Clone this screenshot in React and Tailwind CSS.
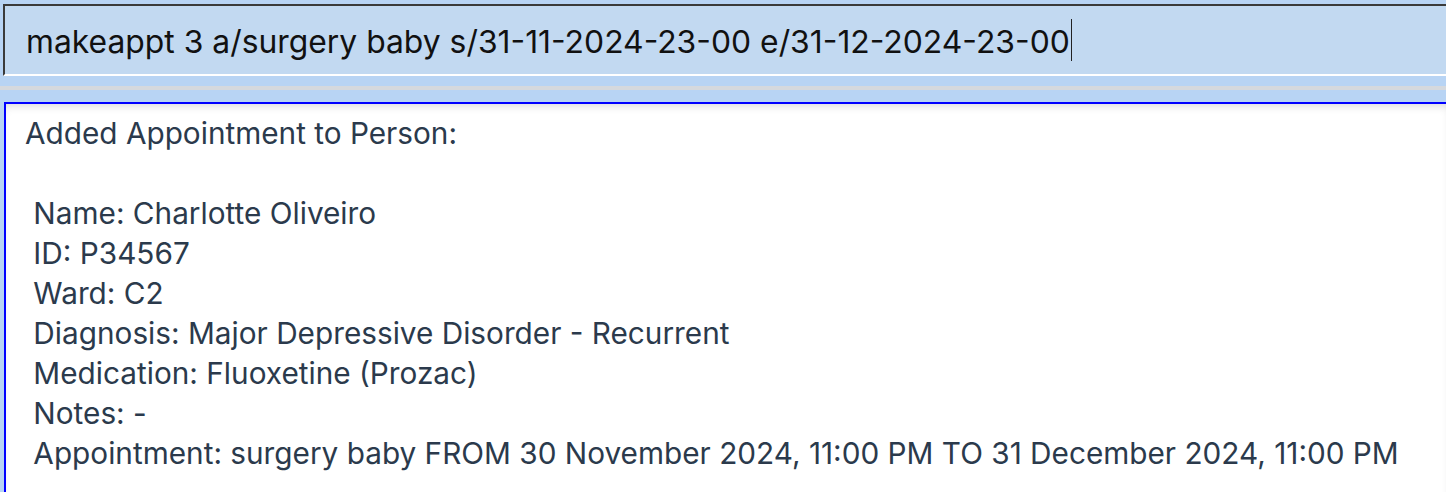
export default function App() {
  const lines = [
    "Added Appointment to Person:",
    "",
    " Name: Charlotte Oliveiro",
    " ID: P34567",
    " Ward: C2",
    " Diagnosis: Major Depressive Disorder - Recurrent",
    " Medication: Fluoxetine (Prozac)",
    " Notes: -",
    " Appointment: surgery baby FROM 30 November 2024, 11:00 PM TO 31 December 2024, 11:00 PM",
  ];
  return (
    <div
      className="w-[1446px] h-[492px] overflow-hidden bg-[#b8d4f4] flex flex-col"
      style={{ fontFamily: "Inter, 'Noto Sans', sans-serif" }}
    >
      <div className="pt-[4px] pl-[3px]">
        <div className="h-[72px] bg-[#c2d9f1] border-t-2 border-l-2 border-b-2 border-t-[#3a3a3a] border-l-[#3a3a3a] border-b-white flex items-center pl-[21px] pt-[3px]">
          <span className="text-[31.85px] text-[#111] leading-none whitespace-pre">
            makeappt 3 a/surgery baby s/31-11-2024-23-00 e/31-12-2024-23-00
          </span>
          <span className="w-[1.5px] h-[42px] bg-[#222] ml-[1px] -mt-[3px]"></span>
        </div>
      </div>
      <div className="h-[10px]"></div>
      <div className="h-[4px] bg-[#d5d9de]"></div>
      <div className="h-[12px]"></div>
      <div className="flex-1 pl-[4px]">
        <div className="h-full bg-white border-t-2 border-l-2 border-[#0000ff] shadow-[inset_0_6px_8px_-4px_rgba(0,0,0,0.15)] pl-[19px] pt-[9px]">
          {lines.map((l, i) => (
            <div
              key={i}
              className="h-[40px] leading-[40px] text-[29.75px] text-[#2b3a4c] whitespace-pre"
            >
              {l}
            </div>
          ))}
        </div>
      </div>
    </div>
  );
}
